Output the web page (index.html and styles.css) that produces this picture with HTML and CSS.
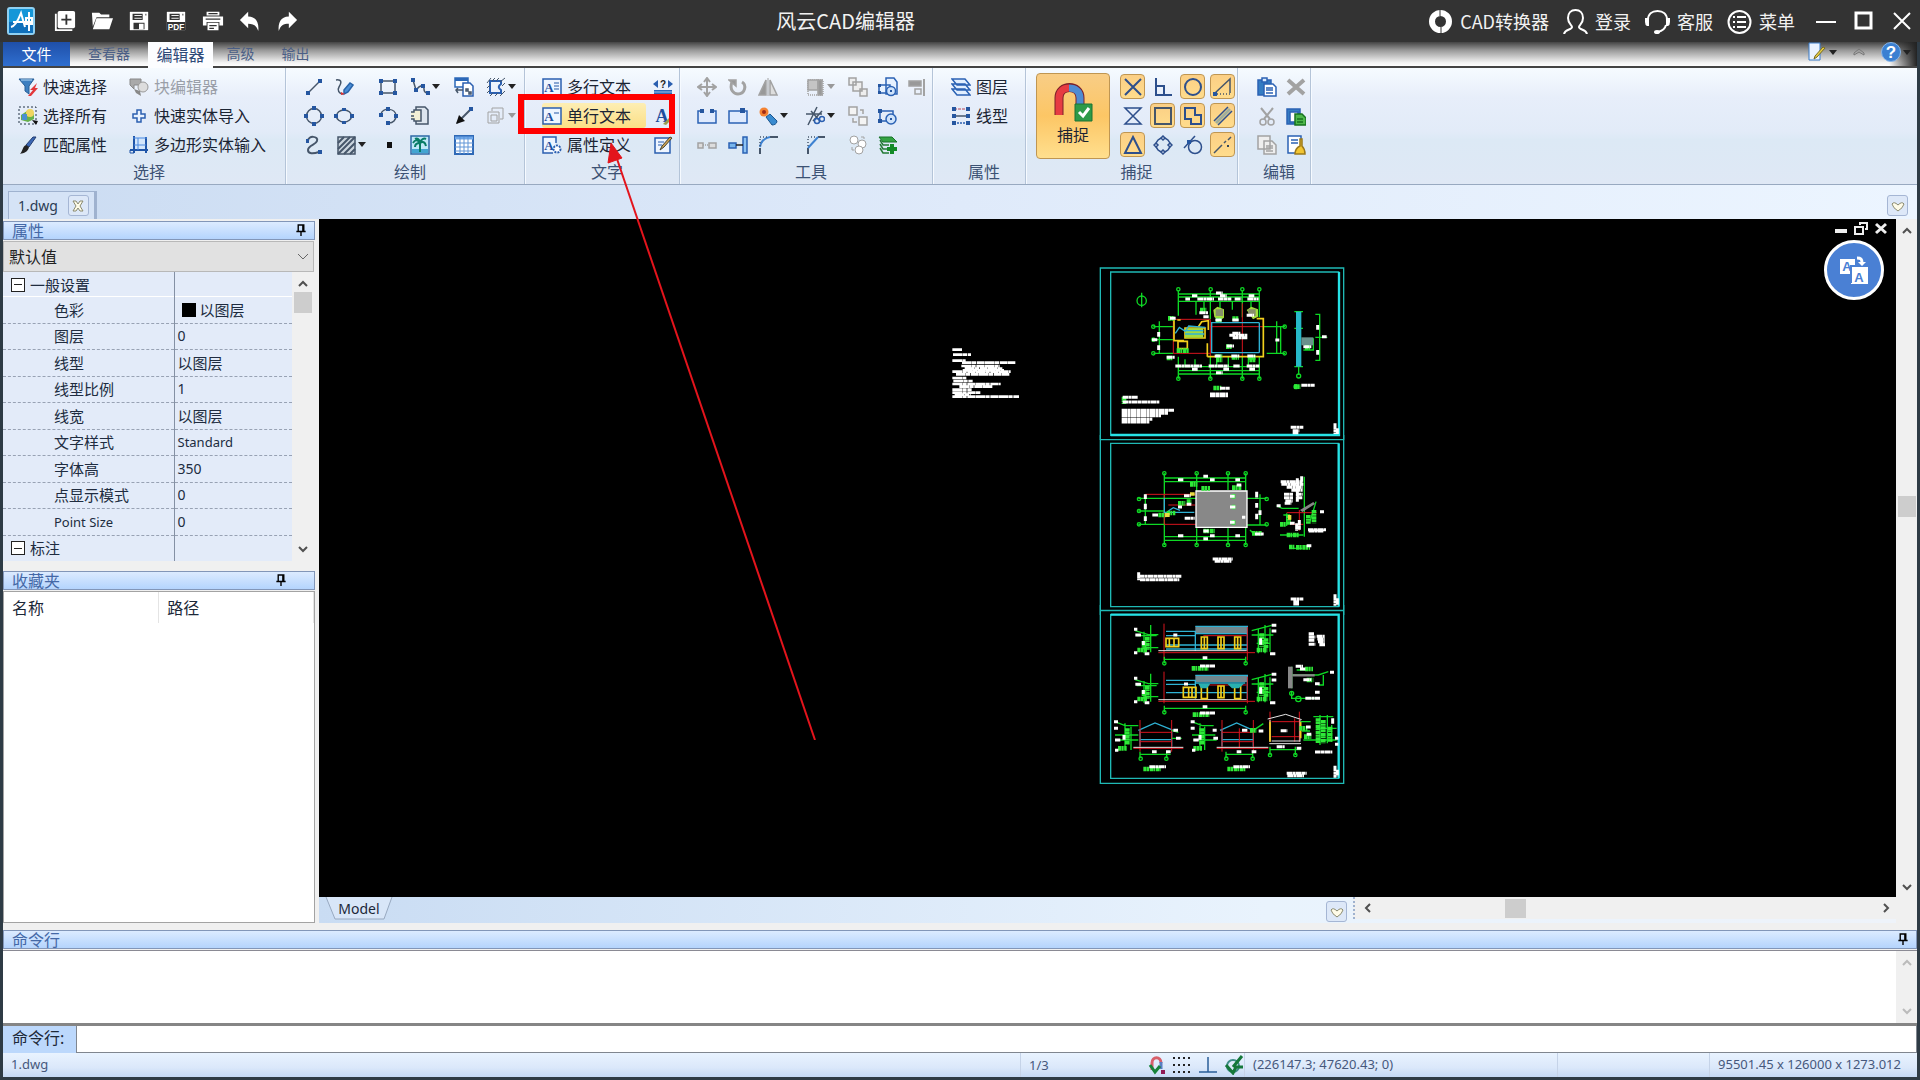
FILE: index.html
```
<!DOCTYPE html>
<html lang="zh-CN">
<head>
    <meta charset="UTF-8">
    <meta name="viewport" content="width=device-width, initial-scale=1.0">
    <title>风云CAD编辑器</title>
    <link rel="stylesheet" href="styles.css">
</head>
<body>
    <header class="titlebar">
        <svg class="logo" viewBox="0 0 28 28"><rect x="1" y="1" width="26" height="26" rx="2" fill="#1597d8" stroke="#8fd0f2" stroke-width="2"/><path d="M2 15h24v11H2z" fill="#0f70bb"/><path d="M4 20c5-1 8-9 10-14l4 14M6 15h19M22 5v19M19 11h6v6h-6z" fill="none" stroke="#fff" stroke-width="2"/></svg>
        <nav class="quick">
            <button aria-label="新建"><svg viewBox="0 0 24 24"><path d="M2 4v18h18" fill="none" stroke="#fff" stroke-width="2"/><rect x="4" y="1" width="19" height="19" rx="2" fill="#fff"/><path d="M13.500 5v11M8 10.500h11" stroke="#333" stroke-width="2"/></svg></button>
            <button aria-label="打开"><svg viewBox="0 0 24 24"><path d="M1 3h8l2 2h9v3H6L2 18zM6 9h18l-4 12H2z" fill="#fff"/></svg></button>
            <button aria-label="保存"><svg viewBox="0 0 24 24"><path d="M2 2h20v20H2z" fill="#fff"/><path d="M5 4h11v7H5zM19 4h1v2h-1zM6 14h12v7H6z" fill="#333"/><path d="M7 6h8M7 9h8" stroke="#fff"/><path d="M12 15h5v6h-5z" fill="#fff"/></svg></button>
            <button aria-label="保存为PDF"><svg viewBox="0 0 24 24"><path d="M2 2h20v20H2z" fill="#fff"/><path d="M5 4h11v7H5zM19 4h1v2h-1zM2 13h20v9H2z" fill="#333"/><path d="M7 6h8M7 9h8" stroke="#fff"/><text x="12" y="22" class="pdf">PDF</text></svg></button>
            <button aria-label="打印"><svg viewBox="0 0 24 24"><path d="M5 2h14v4H5zM1 7h22v10h-4v-4H5v4H1zM6 14h12v8H6z" fill="#fff"/><path d="M7 4h10M8 17h8M8 20h5M4 10h16" stroke="#333" stroke-width="1.500"/></svg></button>
            <button aria-label="撤销"><svg viewBox="0 0 24 24"><path d="M1 11l9-9v5c9 0 12 7 11 16-2-6-5-8-11-8v5z" fill="#fff"/></svg></button>
            <button aria-label="重做"><svg viewBox="0 0 24 24"><path d="M23 11l-9-9v5C5 7 2 14 3 23c2-6 5-8 11-8v5z" fill="#fff"/></svg></button>
        </nav>
        <h1 class="title">风云CAD编辑器</h1>
        <nav class="account">
            <button><svg viewBox="0 0 25 25"><circle cx="12.500" cy="12.500" r="8.500" fill="none" stroke="#fff" stroke-width="6"/><path d="M12 0v7M13 18v7" stroke="#333"/></svg>CAD转换器</button>
            <button><svg viewBox="0 0 25 25"><path d="M1 25c1-5 8-4 8-7 0-2-4-3-4-9 0-5 3-8 7.500-8S20 4 20 9c0 6-4 7-4 9 0 3 7 2 8 7" fill="none" stroke="#fff" stroke-width="2"/></svg>登录</button>
            <button><svg viewBox="0 0 25 25"><path d="M3 11C3 5 7 2 12.500 2S22 5 22 11M21 16c-1 4-4 6-8 7" fill="none" stroke="#fff" stroke-width="2"/><path d="M0 9h4v8H2q-2-1-2-4zM25 9h-4v8h2q2-1 2-4z" fill="#fff"/><ellipse cx="12" cy="23" rx="3" ry="2" fill="#fff"/></svg>客服</button>
            <button><svg viewBox="0 0 25 25"><circle cx="12.500" cy="13" r="11" fill="none" stroke="#fff" stroke-width="2"/><path d="M6 8h2M10 8h9M6 13h2M10 13h9M6 18h2M10 18h9" stroke="#fff" stroke-width="2"/></svg>菜单</button>
        </nav>
        <div class="window-buttons">
            <button aria-label="最小化"><svg viewBox="0 0 20 20"><path d="M0 11h20" stroke="#fff" stroke-width="2"/></svg></button>
            <button aria-label="最大化"><svg viewBox="0 0 20 20"><path d="M2 2h15v15H2z" fill="none" stroke="#fff" stroke-width="3"/></svg></button>
            <button aria-label="关闭"><svg viewBox="0 0 20 20"><path d="M2 2l16 16M18 2L2 18" stroke="#fff" stroke-width="2"/></svg></button>
        </div>
    </header>

    <div class="frame">
        <nav class="tabs">
            <button class="tab file">文件</button>
            <button class="tab">查看器</button>
            <button class="tab active">编辑器</button>
            <button class="tab">高级</button>
            <button class="tab">输出</button>
            <div class="tab-tools">
                <button aria-label="样式"><svg viewBox="0 0 20 20"><path d="M2 1h11v17H2z" fill="#eaf3ff" stroke="#3b7cc9"/><path d="M18 6l-8 9-3 2 1-3 8-9z" fill="#e8cf45" stroke="#776a20"/></svg><svg class="caret" viewBox="0 0 8 5"><path d="M0 0h8L4 5z"/></svg></button>
                <button aria-label="折叠"><svg viewBox="0 0 20 20"><path d="M5 11l5-4 5 4v2l-5-3-5 3z" fill="none" stroke="#777"/></svg></button>
                <button aria-label="帮助"><svg viewBox="0 0 20 20"><circle cx="10" cy="10" r="9.500" fill="#3a80d2" stroke="#86b4e8"/><text x="10" y="16" class="help">?</text></svg><svg class="caret" viewBox="0 0 8 5"><path d="M0 0h8L4 5z"/></svg></button>
            </div>
        </nav>

        <div class="ribbon">
            <section class="group">
                <div class="tools select">
                    <button class="cmd"><svg viewBox="0 0 20 20"><path d="M1 2h15l-5 7v8l-4-3V9z" fill="#3d7fc0" stroke="#285e96"/><path d="M3 3h11" stroke="#b8dcf5"/><path d="M19 6l-7 7h3l-5 6h3l7-8h-3z" fill="#e2373b"/></svg>快速选择</button>
                    <button class="cmd off"><svg viewBox="0 0 20 20"><path d="M1 2h11v6H5v4L1 8z" fill="#aaa" stroke="#888"/><circle cx="14" cy="10" r="5" fill="#ddd" stroke="#999"/><path d="M5 12l6 2 1 5-5-3z" fill="#888"/></svg>块编辑器</button>
                    <button class="cmd"><svg viewBox="0 0 20 20"><path d="M1 1h17v17H1z" fill="none" stroke="#234" stroke-dasharray="2 2"/><path d="M3 9l6-4 7 2v6l-6 3-7-2z" fill="#67b04b"/><circle cx="12" cy="7" r="4" fill="#f0d560"/><path d="M4 8h5v6H4z" fill="#4a8fd1"/><path d="M14 14l6 1-2 4z" fill="#111"/></svg>选择所有</button>
                    <button class="cmd"><svg viewBox="0 0 20 20"><path d="M8 4h4v4h4v4h-4v4H8v-4H4V8h4z" fill="#e8f2ff" stroke="#2b5fb0" stroke-width="1.500"/></svg>快速实体导入</button>
                    <button class="cmd"><svg viewBox="0 0 20 20"><path d="M18 2l-7 10-3-2 7-8z" fill="#3a67b5" stroke="#223d70"/><path d="M8 10l3 2c-1 5-5 6-9 7 3-3 2-7 6-9z" fill="#222"/></svg>匹配属性</button>
                    <button class="cmd"><svg viewBox="0 0 20 20"><path d="M5 2h13v13H5z" fill="#d3e6fb"/><path d="M5 1v17M17 2v16M1 15h18" stroke="#1f55a8" stroke-width="2"/><path d="M4 3h14M9 3v12M5 10h12" stroke="#4c8ae0"/><path d="M1 15v3h4" fill="none" stroke="#1f55a8"/></svg>多边形实体输入</button>
                </div>
                <h2>选择</h2>
            </section>

            <section class="group">
                <div class="tools draw">
                    <button aria-label="直线"><svg class="line" viewBox="0 0 20 20"><path d="M4 16L16 4"/><path class="node" d="M2 14h4v4H2zM14 2h4v4h-4z"/></svg></button>
                    <button aria-label="手绘"><svg class="line" viewBox="0 0 20 20"><path d="M2 3c7-1 5 4 3 7s0 7 4 7"/><path d="M10 13l6-7 3 2-5 7-4 2z" fill="#4c8ed6" stroke="#2863a8"/><path d="M7 15l4 2-4 1z" fill="#d33" stroke="none"/></svg></button>
                    <button aria-label="矩形"><svg class="line" viewBox="0 0 20 20"><path d="M3 4h14v12H3z"/><path class="node" d="M1 2h4v4H1zM15 2h4v4h-4zM1 14h4v4H1zM15 14h4v4h-4z"/></svg></button>
                    <button aria-label="多段线"><svg class="line" viewBox="0 0 20 20"><path d="M3 3l3 10c4-5 8-6 8-1 0 2 1 4 4 4"/><path class="node" d="M1 1h4v4H1zM4 11h4v4H4zM11 7h4v4h-4zM16 14h4v4h-4z"/></svg><svg class="caret" viewBox="0 0 8 5"><path d="M0 0h8L4 5z"/></svg></button>
                    <button aria-label="插入块"><svg class="line" viewBox="0 0 20 20"><path d="M1 1h13v9H1z" fill="#fff" stroke="#2b68b8"/><path d="M1 1h13v3H1z" fill="#2b68b8" stroke="none"/><path d="M9 6h7l3 3v10H9z" fill="#fff" stroke="#2b5fb0"/><path d="M12 12h2v2h-2zM15 15h2v2h-2zM2 13h7M4 11l-2 2 2 3"/></svg></button>
                    <button aria-label="边界"><svg class="line" viewBox="0 0 20 20"><path d="M4 4h11v3c-3 2-3 4 0 6v3H4z" stroke="#2b5fb0" stroke-width="2"/><path d="M1 6l4-5M6 4l3-3M10 4l3-3M14 5l5-4M1 11l3-3M1 16l3-3M4 19l3-3M9 19l3-3M14 19l5-5M16 9l3-3" stroke-width="1"/></svg><svg class="caret" viewBox="0 0 8 5"><path d="M0 0h8L4 5z"/></svg></button>

                    <button aria-label="圆"><svg class="line" viewBox="0 0 20 20"><circle cx="10" cy="10" r="7.500"/><path class="node" d="M8 0h4v4H8zM8 16h4v4H8zM0 8h4v4H0zM16 8h4v4h-4z"/></svg></button>
                    <button aria-label="椭圆"><svg class="line" viewBox="0 0 20 20"><ellipse cx="10" cy="10" rx="7.500" ry="6"/><path class="node" d="M8 2h4v3H8zM8 15h4v3H8zM0 8h4v4H0zM16 8h4v4h-4z"/></svg></button>
                    <button aria-label="圆弧"><svg class="line" viewBox="0 0 20 20"><path d="M3 8c2-7 15-6 15 2 0 4-3 7-7 7"/><path class="node" d="M1 7h4v4H1zM8 1h4v4H8zM16 8h4v4h-4zM8 15h4v4H8z"/></svg></button>
                    <button aria-label="区域"><svg class="line" viewBox="0 0 20 20"><path d="M6 1h9l3 3v14H6z" fill="#dde5ee"/><path d="M1 6h3V4h7v11H4v-2H1M1 10h3" fill="#f3efd5"/></svg></button>
                    <button aria-label="射线"><svg class="line" viewBox="0 0 20 20"><path d="M3 17L17 3" stroke-width="2"/><path d="M2 18l3-9 6 6z" fill="#111" stroke="none"/><path class="node" d="M15 1h4v4h-4z"/></svg></button>
                    <button aria-label="三维" class="off"><svg class="line" viewBox="0 0 20 20"><path d="M2 6h11v11H2zM5 9h6v6H5zM6 5V2h11v11h-3" stroke-width="1"/></svg><svg class="caret" viewBox="0 0 8 5"><path d="M0 0h8L4 5z"/></svg></button>

                    <button aria-label="样条"><svg class="line" viewBox="0 0 20 20"><path d="M4 6c0-6 11-5 9 0-1 4-9 4-9 9 0 4 5 4 11 2" stroke-width="2"/><path class="node" d="M2 4h3v4H2zM14 15h4v4h-4z"/></svg></button>
                    <button aria-label="填充" class="hatch"><svg class="line" viewBox="0 0 20 20"><path d="M2 2h17v17H2z" fill="#cbd5de"/><path d="M2 8l6-6M2 14L14 2M2 19L19 2M8 19L19 8M14 19l5-5" stroke-width="2"/></svg><svg class="caret" viewBox="0 0 8 5"><path d="M0 0h8L4 5z"/></svg></button>
                    <button aria-label="点"><svg viewBox="0 0 20 20"><path d="M9 7h5v6H9z" fill="#111"/></svg></button>
                    <button aria-label="图像"><svg viewBox="0 0 20 20"><path d="M1 1h18v18H1z" fill="#bfe8f7" stroke="#2f69a6" stroke-width="1.500"/><path d="M2 14h16v4H2z" fill="#42a5d2"/><path d="M10 17V8M10 8C7 4 5 5 3 8M10 8c0-4-3-5-5-4M10 8c1-4 4-5 6-4M10 8c3-2 5-1 6 3M10 8c-3 0-5 1-5 4" fill="none" stroke="#087c65" stroke-width="2"/></svg></button>
                    <button aria-label="表格"><svg viewBox="0 0 20 20"><path d="M1 1h18v18H1z" fill="#fff" stroke="#2f69b6" stroke-width="2"/><path d="M1 3h18" stroke="#6da6e8" stroke-width="3"/><path d="M6 2v17M10 2v17M14 2v17M1 8h18M1 12h18M1 16h18" stroke="#6095d6"/></svg></button>
                </div>
                <h2>绘制</h2>
            </section>

            <section class="group">
                <div class="tools text">
                    <button class="cmd"><svg viewBox="0 0 20 20"><path d="M1 2h18v16H1z" class="box"/><text x="7" y="15" class="letter">A</text><path d="M12 6h5M12 9h5M12 12h5" stroke="#2458a6"/></svg>多行文本</button>
                    <button aria-label="标注"><svg viewBox="0 0 20 20"><path d="M1 15h18" stroke="#2b68b8" stroke-width="4"/><path d="M1 15h18" stroke="#9fc4ee"/><path d="M0 7l5-4v8zM20 7l-5-4v8z" fill="#2b5fb0"/><text x="10" y="11" class="small-q">?</text></svg></button>
                    <button class="cmd hover"><svg viewBox="0 0 20 20"><path d="M1 2h18v16H1z" class="box"/><text x="7" y="15" class="letter">A</text><path d="M12 7h5" stroke="#2458a6"/></svg>单行文本</button>
                    <button aria-label="文字样式"><svg viewBox="0 0 20 20"><text x="9" y="16" class="letter big">A</text><path d="M10 18l7-7 2 2-6 6z" fill="#9b9a4e"/></svg></button>
                    <button class="cmd"><svg viewBox="0 0 20 20"><path d="M11 18H1V2h13v6" class="box"/><text x="7" y="15" class="letter">A</text><circle cx="15" cy="14" r="3.500" fill="#fff" stroke="#2b5fb0" stroke-width="2" stroke-dasharray="2 1"/></svg>属性定义</button>
                    <button aria-label="编辑文字"><svg viewBox="0 0 20 20"><path d="M2 3h15v15H2z" class="box"/><path d="M5 7h6M5 10h4" stroke="#2b5fb0"/><path d="M19 3l-8 9-4 3 2-4 8-9z" fill="#d4a450" stroke="#443"/></svg></button>
                </div>
                <h2>文字</h2>
            </section>

            <section class="group">
                <div class="tools modify">
                    <button aria-label="移动" class="off"><svg class="line" viewBox="0 0 20 20"><path d="M10 2v16M2 10h16M7 5l3-4 3 4M7 15l3 4 3-4M5 7l-4 3 4 3M15 7l4 3-4 3" stroke-width="2"/></svg></button>
                    <button aria-label="旋转" class="off"><svg class="line" viewBox="0 0 20 20"><path d="M4 5c-3 8 2 12 6 12 7 0 9-9 4-12" stroke-width="3"/><path d="M1 3h7v6z" fill="#999"/></svg></button>
                    <button aria-label="镜像" class="off"><svg class="line" viewBox="0 0 20 20"><path d="M1 18h7V3z" fill="#999"/><path d="M12 18h7L12 3z" fill="#ddd"/><path d="M10 1v18" stroke-width="1"/></svg></button>
                    <button aria-label="阵列" class="off"><svg class="line" viewBox="0 0 20 20"><path d="M3 3h15v15H3z" stroke-dasharray="1 1"/><path d="M3 3h10v10H3z" fill="#c4c4c4"/><path d="M13 3h4v15h-4z" fill="#999"/></svg><svg class="caret" viewBox="0 0 8 5"><path d="M0 0h8L4 5z"/></svg></button>
                    <button aria-label="组合" class="off"><svg class="line" viewBox="0 0 20 20"><path d="M1 1h7v7H1zM12 12h7v7h-7zM5 5h9v9H5z" fill="#eee"/></svg></button>
                    <button aria-label="形状"><svg class="line blue" viewBox="0 0 20 20"><path d="M8 1h8l3 4v12H8zM1 8h11v8H1z" fill="#e6f1ff"/><circle cx="13" cy="14" r="4.500" fill="#cfe3fb"/><path class="node" d="M0 7h3v3H0zM0 14h3v3H0zM12 13h2v2h-2z"/></svg></button>
                    <button aria-label="对齐" class="off"><svg class="line" viewBox="0 0 20 20"><path d="M2 4h12v5H2z" fill="#999"/><path d="M8 12h6v5H8z"/><path d="M17 2v17" stroke-width="2"/></svg></button>

                    <button aria-label="打断"><svg class="line blue" viewBox="0 0 20 20"><path d="M5 5H1v12h18V5h-4" fill="#dfeafd"/><path class="node" d="M3 3h4v4H3zM13 3h4v4h-4z"/></svg></button>
                    <button aria-label="打断于点"><svg class="line blue" viewBox="0 0 20 20"><path d="M1 5h18v12H1z" fill="#dfeafd"/><path class="node" d="M12 2h5v5h-5z"/></svg></button>
                    <button aria-label="分解"><svg viewBox="0 0 20 20"><circle cx="6" cy="6" r="4.500" fill="#f48232"/><circle cx="6" cy="6" r="2" fill="#a02b16"/><path d="M8 11l4-3 7 7c0 3-3 4-5 4z" fill="#398bd0" stroke="#1b568f"/></svg><svg class="caret" viewBox="0 0 8 5"><path d="M0 0h8L4 5z"/></svg></button>
                    <button aria-label="修剪"><svg class="line" viewBox="0 0 20 20"><path d="M12 1L3 19M1 8h16M6 5l9 10M17 5L8 15"/><circle cx="12" cy="15" r="2.500" stroke="#2b5fb0"/><circle cx="17" cy="13" r="2.500" stroke="#2b5fb0"/></svg><svg class="caret" viewBox="0 0 8 5"><path d="M0 0h8L4 5z"/></svg></button>
                    <button aria-label="取消组合" class="off"><svg class="line" viewBox="0 0 20 20"><path d="M1 1h8v8H1zM11 11h8v8h-8zM12 4h3v4M5 12v4h4" fill="#f4f4f4"/></svg></button>
                    <button aria-label="编辑形状"><svg class="line blue" viewBox="0 0 20 20"><path d="M2 5h13v10H2z"/><circle cx="13" cy="13" r="5" fill="#cfe3fb"/><path class="node" d="M0 3h4v4H0zM0 13h4v4H0zM12 12h2v2h-2z"/></svg></button>
                    <span></span>

                    <button aria-label="连接" class="off"><svg class="line" viewBox="0 0 20 20"><path d="M1 8h5v5H1zM12 8h7v5h-7z" fill="#ddd"/><path d="M6 10h6" stroke-dasharray="1 1"/></svg></button>
                    <button aria-label="延伸"><svg class="line blue" viewBox="0 0 20 20"><path d="M1 8h7v5H1z" fill="#79b6ec"/><path d="M15 2h4v16h-4z" fill="#8fc4f3"/><path d="M8 10h7" stroke="#222"/></svg></button>
                    <button aria-label="圆角"><svg class="line" viewBox="0 0 20 20"><path d="M2 19v-6M12 2h8" stroke-width="2"/><path d="M2 12C3 6 7 3 12 2" stroke="#3d82d1" stroke-width="2"/><path d="M2 11V2h9" stroke-dasharray="1 2"/></svg></button>
                    <button aria-label="倒角"><svg class="line" viewBox="0 0 20 20"><path d="M3 19v-6M13 2h7" stroke-width="2"/><path d="M3 13L13 2" stroke="#3d82d1" stroke-width="2"/><path d="M3 11V2h8" stroke-dasharray="1 2"/></svg></button>
                    <button aria-label="绘图次序" class="off"><svg class="line" viewBox="0 0 20 20"><g stroke-width="1"><circle cx="6" cy="5" r="4" fill="#fff"/><circle cx="14" cy="9" r="4" fill="#fff"/><circle cx="11" cy="15" r="4" fill="#fff"/><path d="M13 2h3v2M4 12v3h2"/></g></svg></button>
                    <button aria-label="添加图层"><svg viewBox="0 0 20 20"><path d="M1 2h13l5 5H5z" fill="#35a343" stroke="#187329"/><path d="M2 5l3 5h6M2 9l3 5h6M2 13l3 5h6" fill="none" stroke="#247b36" stroke-width="1.500"/><path d="M14 9v10M9 14h10" stroke="#138b27" stroke-width="4"/></svg></button>
                </div>
                <h2>工具</h2>
            </section>

            <section class="group">
                <div class="tools props">
                    <button class="cmd"><svg class="line blue" viewBox="0 0 20 20"><path d="M1 12h13l5 6H6zM1 7h13l5 6H6zM1 2h13l5 6H6z" fill="#e2efff"/></svg>图层</button>
                    <button class="cmd"><svg class="line" viewBox="0 0 20 20"><path d="M3 3h14" stroke="#c67d8e" stroke-dasharray="3 1"/><path d="M3 10h14"/><path d="M3 17h14" stroke="#2b5fb0" stroke-dasharray="2 1"/><path class="node" d="M1 1h4v4H1zM15 1h4v4h-4zM1 8h4v4H1zM15 8h4v4h-4zM1 15h4v4H1zM15 15h4v4h-4z"/></svg>线型</button>
                </div>
                <h2>属性</h2>
            </section>

            <section class="group">
                <div class="tools snap">
                    <button class="snap-big on"><svg viewBox="0 0 40 40"><path d="M6 33V16C6 2 27 2 27 16v7" fill="none" stroke="#7b2029" stroke-width="9"/><path d="M6 33V16C6 9 11 6 16 6" fill="none" stroke="#e63b42" stroke-width="7"/><path d="M16 6c6 0 11 3 11 10v7" fill="none" stroke="#4f8bd1" stroke-width="7"/><path d="M22 22h17v17H22z" fill="#2d9a48" stroke="#1c7333"/><path d="M26 30l4 4 6-8" fill="none" stroke="#fff" stroke-width="3"/></svg>捕捉</button>
                    <button aria-label="交点" class="toggle on"><svg class="line navy" viewBox="0 0 20 20"><path d="M2 2l16 16M18 2L2 18" stroke-width="2"/></svg></button>
                    <button aria-label="垂足" class="toggle"><svg class="line navy" viewBox="0 0 20 20"><path d="M3 1v17h16M3 9h8v9" stroke-width="2"/></svg></button>
                    <button aria-label="圆心" class="toggle on"><svg class="line navy" viewBox="0 0 20 20"><circle cx="10" cy="10" r="8" stroke-width="2"/></svg></button>
                    <button aria-label="延长" class="toggle on"><svg class="line" viewBox="0 0 20 20"><path d="M2 16L17 2v14"/><path d="M1 17h18" stroke-dasharray="1 2"/><path class="node" d="M0 15h4v4H0z"/></svg></button>
                    <button aria-label="最近点" class="toggle"><svg class="line navy" viewBox="0 0 20 20"><path d="M2 2h16L2 18h16z"/></svg></button>
                    <button aria-label="端点" class="toggle on"><svg class="line" viewBox="0 0 20 20"><path d="M2 2h16v16H2z" stroke-width="2"/></svg></button>
                    <button aria-label="插入点" class="toggle on"><svg class="line navy" viewBox="0 0 20 20"><path d="M2 2h10v7h6v9H8v-5H2z" stroke-width="2"/></svg></button>
                    <button aria-label="平行" class="toggle on"><svg class="line navy" viewBox="0 0 20 20"><path d="M3 17L17 3" stroke="#9fae9c" stroke-width="3"/><path d="M1 15L15 1M5 19L19 5"/></svg></button>
                    <button aria-label="中点" class="toggle on"><svg class="line navy" viewBox="0 0 20 20"><path d="M10 2l8 16H2z" stroke-width="2"/></svg></button>
                    <button aria-label="象限点" class="toggle"><svg class="line navy" viewBox="0 0 20 20"><circle cx="10" cy="10" r="7"/><path d="M10 1l2 2-2 2-2-2zM10 15l2 2-2 2-2-2zM3 8l2 2-2 2-2-2zM17 8l2 2-2 2-2-2z" fill="#e8f0fb"/></svg></button>
                    <button aria-label="切点" class="toggle"><svg class="line navy" viewBox="0 0 20 20"><circle cx="12" cy="12" r="6.500"/><path d="M1 13L12 1"/><path class="node" d="M4 5h4v4H4z"/></svg></button>
                    <button aria-label="节点" class="toggle on"><svg class="line" viewBox="0 0 20 20"><path d="M1 18L9 10M11 8l2-2M15 5l3-3"/><path d="M14 10h2v2h-2z" fill="#345" stroke="none"/></svg></button>
                </div>
                <h2>捕捉</h2>
            </section>

            <section class="group">
                <div class="tools edit">
                    <button aria-label="粘贴"><svg class="line blue" viewBox="0 0 20 20"><path d="M1 3h13v15H1z" fill="#347cc2"/><path d="M5 1h5v4H5z" fill="#dcecff"/><path d="M7 7h9l3 3v9H7z" fill="#fff"/><path d="M9 11h7M9 13h7M9 16h7"/></svg></button>
                    <button aria-label="删除" class="off"><svg class="line" viewBox="0 0 20 20"><path d="M2 3l16 14M18 3L2 17" stroke-width="4"/></svg></button>
                    <button aria-label="剪切" class="off"><svg class="line" viewBox="0 0 20 20"><path d="M4 2l9 11M16 2L7 13" stroke-width="2"/><circle cx="6" cy="16" r="3"/><circle cx="14" cy="16" r="3"/></svg></button>
                    <button aria-label="粘贴为块"><svg class="line blue" viewBox="0 0 20 20"><path d="M1 3h13v15H1z" fill="#347cc2"/><path d="M4 6h8v10H4z" fill="#fff"/><path d="M9 8h7l4 4v7H9z" fill="#4eb84b" stroke="#17721f"/><path d="M11 13h6M11 16h6" stroke="#17721f"/></svg></button>
                    <button aria-label="复制" class="off"><svg class="line" viewBox="0 0 20 20"><path d="M1 1h12v13H1zM7 6h8l4 4v9H7z" fill="#eee"/><path d="M9 11h7M9 13h7M9 16h7"/></svg></button>
                    <button aria-label="清理"><svg class="line blue" viewBox="0 0 20 20"><path d="M2 1h13v17H2z" fill="#fff"/><path d="M5 5h7M5 8h7"/><path d="M14 4v7c-4 2-5 5-5 8h10c0-4-1-6-3-8V4z" fill="#f2c532" stroke="#9b791b"/></svg></button>
                </div>
                <h2>编辑</h2>
            </section>
        </div>

        <div class="doc-tabs">
            <div class="doc-tab">1.dwg <button class="mini" aria-label="关闭文档"><svg viewBox="0 0 14 14"><path d="M2 2h3l2 3 2-3h3L9 7l3 5H9L7 9l-2 3H2l3-5z" fill="#fffce8" stroke="#8a8a70"/></svg></button></div>
            <button class="mini" aria-label="文档列表"><svg viewBox="0 0 14 14"><path d="M1 5q2-3 6 1 4-4 6-1-1 4-6 7-5-3-6-7z" fill="#fffce8" stroke="#8a8a70"/></svg></button>
        </div>

        <main class="workspace">
            <aside class="side">
                <h3 class="panel-head">属性<svg class="pin" viewBox="0 0 10 14"><path d="M2 1h6v7H2zM0 8h10M5 8v5M7 1v7" fill="none" stroke="#000" stroke-width="1.500"/></svg></h3>
                <select class="preset" aria-label="属性集"><option>默认值</option></select>
                <div class="prop-area">
                    <table class="prop-table">
                        <tr class="section first"><th scope="row"><i class="minus"></i>一般设置</th><td></td></tr>
                        <tr><th scope="row">色彩</th><td class="color"><i class="swatch"></i>以图层</td></tr>
                        <tr><th scope="row">图层</th><td>0</td></tr>
                        <tr><th scope="row">线型</th><td>以图层</td></tr>
                        <tr><th scope="row">线型比例</th><td>1</td></tr>
                        <tr><th scope="row">线宽</th><td>以图层</td></tr>
                        <tr><th scope="row">文字样式</th><td>Standard</td></tr>
                        <tr><th scope="row">字体高</th><td>350</td></tr>
                        <tr><th scope="row">点显示模式</th><td>0</td></tr>
                        <tr><th scope="row">Point Size</th><td>0</td></tr>
                        <tr class="section"><th scope="row"><i class="minus"></i>标注</th><td></td></tr>
                    </table>
                    <div class="vscroll">
                        <button aria-label="向上"><svg class="chev" viewBox="0 0 12 12"><path d="M2 8l4-4 4 4"/></svg></button>
                        <div class="thumb"></div>
                        <button class="end" aria-label="向下"><svg class="chev" viewBox="0 0 12 12"><path d="M2 4l4 4 4-4"/></svg></button>
                    </div>
                </div>
                <h3 class="panel-head fav">收藏夹<svg class="pin" viewBox="0 0 10 14"><path d="M2 1h6v7H2zM0 8h10M5 8v5M7 1v7" fill="none" stroke="#000" stroke-width="1.500"/></svg></h3>
                <div class="fav-list">
                    <table>
                        <thead><tr><th>名称</th><th>路径</th></tr></thead>
                    </table>
                </div>
            </aside>

            <section class="view">
                <div class="canvas">
                    <svg class="drawing" viewBox="0 0 1577 678" preserveAspectRatio="xMidYMin meet">
                        <!-- notes beside the sheets -->
                        <svg x="601" y="111" width="120" height="80" viewBox="0 0 360 240">
                            <g class="note">
                                <path d="M97 59h30M99 74h54M97 92h40"/>
                                <path d="M126 98h160M124 108h116M134 116h115M97 125h175M108 133h160M97 144h42M100 153h58M97 162h145M118 170h100M97 179h58M97 188h84M97 200h200M128 121h124M104 194h48"/>
                            </g>
                        </svg>

                        <!-- sheet 1: floor plan -->
                        <svg x="771" y="41" width="270" height="180" viewBox="0 0 810 540">
                            <path class="frame-line" d="M31 540V24h730v516M62 526V36h684v490z"/>
                            <path class="frame-bold" d="M62 525h685V36"/>
                            <circle class="g" cx="155" cy="122" r="14"/>
                            <path class="g" d="M155 98v44M265 92v75M361 92v86M457 92v80M508 92v80M265 102h243M265 111h243M265 124h243M318 124v40M342 124v25M390 124v50M427 124v25M483 124v26M265 290v66M361 290v66M457 290v66M508 290v66M265 320h243M265 332h243M265 342h243M190 200h60M190 239h60M190 280h60M208 184v96M520 200h65M530 280h55M560 184v96M572 200v80M285 298v24M315 298v24M380 290v30M415 290v30M475 290v30"/>
                            <path class="g" d="M613 155h26M613 205h26M613 320h26M626 155v190M676 163h13v138h-13M676 232h36M640 270h30v-35M618 380h10"/>
                            <g class="gc"><circle cx="265" cy="88" r="5"/><circle cx="362" cy="88" r="5"/><circle cx="457" cy="88" r="5"/><circle cx="508" cy="88" r="5"/><circle cx="265" cy="356" r="5"/><circle cx="361" cy="356" r="5"/><circle cx="457" cy="356" r="5"/><circle cx="508" cy="356" r="5"/><circle cx="190" cy="200" r="5"/><circle cx="190" cy="239" r="5"/><circle cx="190" cy="280" r="5"/><circle cx="584" cy="200" r="5"/><circle cx="584" cy="280" r="5"/><circle cx="626" cy="348" r="6"/><circle cx="618" cy="380" r="6"/></g>
                            <path class="r" d="M250 280V178h110M360 200h160M250 280h110M457 130v160M361 178v110M520 176v20"/>
                            <path class="o" d="M252 180v62h30M262 180h10M352 290h168V176h-20M352 250v40M325 200l10-15 20-3v28M285 204h60v30h-60zM264 244h28v22h-28z"/>
                            <path fill="#a5dc3c" d="M285 205h55v28h-55zM370 150l12-10 20 8v25l-15 10-14-12zM470 150l14-10 20 8v22l-15 8z"/>
                            <path fill="#868f6a" d="M377 148h22v20h-22zM475 148h22v20h-22z"/>
                            <path class="c2" d="M256 220l12-18 18 12 10-16 50 4M285 212h55M285 222h58M363 188h145M363 278h145M365 188v90M508 188v90"/>
                            <path fill="#26b9c9" d="M618 155h16v165h-16z"/><path fill="#69918c" d="M634 232h36v24h-36z"/>
                            <path class="gt" d="M370 384h24M230 294h18M378 290h20M425 292h22M474 292h22M378 180h18M427 176h20M408 260h18M612 380h20M645 262h15M102 410v22M234 175h20M330 150h20M260 272h36M378 300h20M478 300h20"/>
                            <g class="label">
                                <path d="M378 99h20M306 107h16M390 107h20M476 107h18M286 117h14M322 117h50M384 117h40M434 117h20M472 117h34M328 158h26M340 170h16M376 180h20M470 166h22M427 180h20M427 220h24M418 226h54M428 233h44M410 258h22M256 318h80M356 318h60M430 318h20M470 318h38M306 328h18M400 328h18M478 328h18M378 338h20M240 175h18M230 292h24M374 288h20M424 288h24M472 288h24M390 385h30M640 260h24M634 376h40M696 230h14M186 239h16M556 240h12M206 216v14M206 256v14M683 195v14M683 270v14"/>
                                <path d="M360 402h54M360 407h54M98 412h46M98 426h110M95 451h158M95 460h140M95 467h118M95 478h92M95 486h84M602 502h38M608 512h20M608 518h18M735 490v32M742 505v18"/>
                            </g>
                        </svg>

                        <!-- sheet 2: roof plan -->
                        <svg x="771" y="216" width="270" height="180" viewBox="0 0 810 540">
                            <path class="frame-line" d="M31 0v540M761 0v540M31 14h730M31 526h730M62 25h684v490H62z"/>
                            <path class="frame-bold" d="M746 25v490"/>
                            <path class="g" d="M223 115v215M320 115v60M320 280v50M414 115v50M414 280v50M467 115v215M223 129h244M223 140h244M223 305h244M223 316h244M145 190h175M145 228h80M145 268h80M166 178v90M470 190h60M470 270h60M510 178v92M480 285l12 12h20M643 125v180M560 212l16 8h50M570 300h70M660 260l18-60M580 240h20M597 340h40M590 235v38"/>
                            <g class="gc"><circle cx="223" cy="115" r="5"/><circle cx="320" cy="115" r="5"/><circle cx="414" cy="115" r="5"/><circle cx="467" cy="115" r="5"/><circle cx="223" cy="330" r="5"/><circle cx="320" cy="330" r="5"/><circle cx="414" cy="330" r="5"/><circle cx="467" cy="330" r="5"/><circle cx="147" cy="192" r="5"/><circle cx="147" cy="228" r="5"/><circle cx="147" cy="268" r="5"/><circle cx="530" cy="192" r="5"/><circle cx="530" cy="268" r="5"/></g>
                            <path class="r" d="M166 178h150M223 268h95M223 178v90M235 210h80M590 233h90M628 225v62M600 268h40"/>
                            <path class="c2" d="M223 188v46M223 232h90M235 228l15-10 20 8"/>
                            <path fill="#888" stroke="#fff" stroke-width="4" d="M318 168h153v109H318z"/>
                            <path fill="#888" d="M630 225l40-24 5 6-38 24z"/>
                            <path class="gt" d="M300 148h22M334 160h26M426 158h28M340 288h34M205 240h24M230 234h26M264 205h22M290 200h14M425 184h12M425 216h12M425 262h12M597 336h16M618 337h42M655 240v26M672 225v40M570 268h18M590 300h38M596 240v30M486 295h30"/>
                            <path fill="#e9dd43" d="M300 172h14v10h-14zM225 234h14v12h-14zM594 240h10v14h-10z"/>
                            <g class="label">
                                <path d="M340 124h14M264 134h16M360 134h14M436 134h14M440 150h14M282 182h20M284 250h30M290 208h14M264 216h12M187 240h18M340 288h16M420 184h14M420 216h16M420 262h14M456 247h10M264 302h16M360 302h14M436 302h14M340 311h14M495 297h26M166 178v14M166 206v18M166 244v14M500 170v20M500 204v14M500 236v18M510 226v14M560 212h12M600 265h14M690 230h12M650 332h14"/>
                                <path d="M368 372h60M374 379h50M146 424h128M150 434h118M146 412v24M572 140h66M574 148h66M590 157h48M604 166h34M582 178h28M618 178h20M582 188h28M620 188h18M586 198h22M584 205h20M622 130v70M635 124v16M654 284h54M656 288h44M602 492h38M610 501h18M610 507h18M735 478v34M742 490v20M628 255v30M620 265v22"/>
                            </g>
                        </svg>

                        <!-- sheet 3: elevations and sections -->
                        <svg x="771" y="386" width="270" height="185" viewBox="0 0 810 555">
                            <path class="frame-line" d="M31 0v535h730V0M31 17h730M62 520V29h684v491z"/>
                            <path class="frame-bold" d="M62 29h684v491"/>
                            <path fill="#71878e" d="M316 64h156v20H316zM316 211h156v20H316z"/>
                            <path class="c2" d="M228 79h88v59M316 64h156v74M316 86h156M228 92h88M228 120h244M228 132h244M228 226h88v55M316 211h156v70M228 238h88M228 263h244M316 234h150"/>
                            <path class="c2" d="M145 376l50-22 55 22M150 374v50M245 374v50M150 404h95M390 376l50-22 50 22M396 374v50M490 374v50M396 404h95"/>
                            <path class="r" d="M205 143h290M205 289h290M222 56v110M472 66v100M222 200v95M472 215v80M340 92h130M340 240h130M130 430h150M380 430h155M150 345v95M245 345v95M150 382h95M150 410h95M396 345v95M490 345v95M448 370v60M396 382h95M396 410h95M540 320v90M628 320v90M614 340v70M545 350h85M545 395h85"/>
                            <path stroke="#e8e8e8" stroke-width="3" fill="none" d="M205 137h265M205 284h265M130 427h150M380 427h155M533 342l54-14 48 16M540 345v65M630 345v65M545 408h85M538 416h95"/>
                            <path class="o" d="M228 100h38v25h-38zM238 100v25M252 100v25M334 96h18v35h-18zM384 96h18v35h-18zM434 96h18v35h-18zM280 247h38v30h-38zM296 247v30M306 247v30M334 243h18v38h-18zM384 243h18v35h-18zM434 243h18v38h-18zM540 350v60M632 350v50M343 96v35M393 96v35M443 96v35M393 243v35"/>
                            <path fill="#29b0b0" d="M325 236h36l-10 14h-18zM412 236h50l-16 14h-20z"/>
                            <path class="g" d="M223 155v20M467 155v20M223 163h244M223 302v20M467 302v20M223 310h244M135 77l40 12h30M140 92h60M160 128h45M182 60v82M162 80v65M485 77l60-16M485 90h65M500 115h40M505 70v75M525 60v85M540 70v70M135 224l40 12h30M140 242h60M160 275h45M182 206v84M162 228v65M485 224l60-16M485 237h65M500 262h40M505 217v75M525 207v85M540 217v70"/>
                            <path class="g" d="M75 350l30 12h40M75 390h70M75 405h70M105 355v80M123 365v70M306 350l30 12h35M306 390h70M310 405h70M330 355v80M344 365v70M150 440v20M230 440v20M150 448h92M408 440v20M488 440v20M408 448h80M245 376l20 6M245 400h30M490 376l30-20M540 425v25M616 425v25M540 434h92M632 350h30M636 378h24M640 405h100M690 330v90M712 330v85M670 335h60M680 370h60M725 360v50"/>
                            <path class="g" d="M605 185v65M620 195h30M605 210h80l30-10M700 210v30h-15M605 280h80M605 260v22"/>
                            <path stroke="#888" stroke-width="14" d="M601 185v65"/><path stroke="#888" stroke-width="7" d="M608 211h66"/>
                            <g class="gc"><circle cx="223" cy="175" r="5"/><circle cx="467" cy="175" r="5"/><circle cx="223" cy="322" r="5"/><circle cx="467" cy="322" r="5"/><circle cx="152" cy="461" r="5"/><circle cx="229" cy="461" r="5"/><circle cx="409" cy="461" r="5"/><circle cx="488" cy="461" r="5"/><circle cx="540" cy="450" r="5"/><circle cx="616" cy="450" r="5"/><circle cx="625" cy="282" r="8"/><circle cx="605" cy="265" r="6"/></g>
                            <path class="gt" d="M305 190h50M308 329h50M160 492h52M412 492h54M172 95v40M162 108v25M172 242v40M162 256v25M515 85v40M528 100v30M515 232v40M528 246v30M142 135h30M142 282h30M500 135h32M500 282h32M112 370v50M335 370v50M84 430h26M310 430h26M684 340v75M700 345v70M720 365v45M645 192h24M650 225h20M628 370h24M642 395h22M480 376h20"/>
                            <g class="label">
                                <path d="M132 73h10M250 90h12M136 90h18M132 143h10M164 146h14M160 108v12M338 158h14M545 61h14M545 78h14M512 100v20M540 146h16M330 183h46M132 220h10M136 238h18M132 290h10M164 293h14M160 255v12M338 305h14M282 237h12M545 208h14M545 225h14M512 247v20M540 293h16M330 324h46M72 350h12M72 370h12M75 405h16M75 436h10M102 390v14M250 376h14M258 400h14M186 440h14M228 440h14M302 350h12M302 370h12M310 405h16M306 436h10M330 390v14M368 376h12M370 400h14M440 440h14M485 440h14M456 376h16M178 485h50M430 485h50M572 377h20M560 425h24M620 430h14M648 366h14M650 388h14M675 441h52M617 184h22M630 192h16M640 224h24M675 236h14M720 202h12M675 262h14M646 280h44M728 340v16M735 400h10M735 418h10M506 378h14"/>
                                <path d="M656 86h16M656 96h20M656 106h18M656 118h20M680 94h24M682 102h22M684 110h20M688 119h18M590 505h60M592 512h50M735 482v36M742 494v20"/>
                            </g>
                        </svg>
                    </svg>
                    <div class="mdi">
                        <button aria-label="最小化文档"><svg viewBox="0 0 14 14"><path d="M1 10h12" stroke="#eee" stroke-width="4"/></svg></button>
                        <button aria-label="还原文档"><svg viewBox="0 0 14 14"><path d="M6 4V2h7v6h-2M1 6h8v7H1z" fill="none" stroke="#eee" stroke-width="2"/></svg></button>
                        <button aria-label="关闭当前文档"><svg viewBox="0 0 14 14"><path d="M2 3l10 9M12 3L2 12" stroke="#eee" stroke-width="3"/></svg></button>
                    </div>
                    <button class="translate" aria-label="翻译"><svg viewBox="0 0 30 30"><path d="M1 4h15v15H1zM12 12h17v17H12z" fill="#fff"/><path d="M12 12V28M11 11h18" stroke="#4a80d4" stroke-width="2"/><text x="8" y="16" class="tr">A</text><text x="20" y="27" class="tr">A</text><path d="M18 3c4 0 5 1 5 5" fill="none" stroke="#fff" stroke-width="3"/><path d="M19 7h8l-4 4z" fill="#fff"/></svg></button>
                </div>
                <div class="sheet-bar">
                    <button class="sheet-tab">Model</button>
                    <button class="mini" aria-label="布局列表"><svg viewBox="0 0 14 14"><path d="M1 5q2-3 6 1 4-4 6-1-1 4-6 7-5-3-6-7z" fill="#fffce8" stroke="#8a8a70"/></svg></button>
                    <div class="hscroll">
                        <button aria-label="向左"><svg class="chev" viewBox="0 0 12 12"><path d="M8 2L4 6l4 4"/></svg></button>
                        <div class="thumb"></div>
                        <button class="end" aria-label="向右"><svg class="chev" viewBox="0 0 12 12"><path d="M4 2l4 4-4 4"/></svg></button>
                    </div>
                </div>
            </section>
            <div class="vscroll view-scroll">
                <button aria-label="画布向上"><svg class="chev" viewBox="0 0 12 12"><path d="M2 8l4-4 4 4"/></svg></button>
                <div class="thumb"></div>
                <button class="end" aria-label="画布向下"><svg class="chev" viewBox="0 0 12 12"><path d="M2 4l4 4 4-4"/></svg></button>
            </div>
        </main>

        <section class="command">
            <h3 class="panel-head">命令行<svg class="pin" viewBox="0 0 10 14"><path d="M2 1h6v7H2zM0 8h10M5 8v5M7 1v7" fill="none" stroke="#000" stroke-width="1.500"/></svg></h3>
            <div class="log">
                <textarea aria-label="命令记录" readonly></textarea>
                <div class="vscroll dim">
                    <button aria-label="记录向上"><svg class="chev" viewBox="0 0 12 12"><path d="M2 8l4-4 4 4"/></svg></button>
                    <button class="end" aria-label="记录向下"><svg class="chev" viewBox="0 0 12 12"><path d="M2 4l4 4 4-4"/></svg></button>
                </div>
            </div>
            <div class="prompt">
                <label for="cmd-input">命令行:</label>
                <input id="cmd-input" type="text">
            </div>
        </section>

        <footer class="status">
            <span class="doc">1.dwg</span>
            <div class="pages">
                <span>1/3</span>
                <button class="push" aria-label="对象捕捉"><svg viewBox="0 0 20 20"><path d="M6 15V8c0-7 9-7 9 0" fill="none" stroke="#d7606b" stroke-width="3"/><path d="M15 7v7" stroke="#587ec2" stroke-width="3"/><path d="M4 10l5 7 5-6" fill="none" stroke="#16833a" stroke-width="3"/><path d="M15 15h4v4h-4z" fill="#901a55"/></svg></button>
                <button aria-label="栅格"><svg viewBox="0 0 20 20"><path d="M1 3h18M1 10h18M1 17h18" stroke="#222" stroke-width="2" stroke-dasharray="2 3"/></svg></button>
                <button aria-label="正交"><svg viewBox="0 0 20 20"><path d="M10 2v15M1 17h18" stroke="#2a5d98" stroke-width="1.500"/></svg></button>
                <button aria-label="极轴"><svg viewBox="0 0 20 20"><circle cx="9" cy="11" r="6" fill="none" stroke="#3e8d86" stroke-width="2"/><path d="M2 10l7 8 3-6h7M9 12l9-11" fill="none" stroke="#15783a" stroke-width="3"/></svg></button>
            </div>
            <span>(226147.3; 47620.43; 0)</span>
            <span></span>
            <span class="size">95501.45 x 126000 x 1273.012</span>
        </footer>
    </div>

    <!-- callout pointing at 单行文本 -->
    <svg class="callout" viewBox="0 0 310 650">
        <rect x="11" y="7" width="151" height="34" fill="none" stroke="#f00" stroke-width="6"/>
        <path d="M305 650L106 66" stroke="#e3141c" stroke-width="2"/>
        <path d="M101 53l11 15-14 5z" fill="#e3141c" stroke="#e3141c"/>
    </svg>
</body>
</html>
```

FILE: styles.css
```
* {
    box-sizing: border-box;
}
body {
    margin: 0;
    min-height: 100vh;
    display: flex;
    flex-direction: column;
    position: relative;
    background: #2e3b45;
    color: #1c2838;
    font-family: "Noto Sans", "Noto Sans CJK SC", sans-serif;
    font-size: 16px;
    overflow: hidden;
}
button {
    display: flex;
    align-items: center;
    padding: 0;
    border: 0;
    background: none;
    color: inherit;
    font: inherit;
    white-space: nowrap;
}
svg {
    display: block;
    flex: none;
}
h1, h2, h3 {
    margin: 0;
    font-weight: 400;
}

/* title bar */
.titlebar {
    display: flex;
    align-items: center;
    height: 42px;
    padding: 0 8px 0 7px;
    background: #333;
    color: #f2f2f2;
    font-family: "Noto Sans CJK SC", sans-serif;
}
.logo {
    width: 28px;
    height: 28px;
    margin-right: 11px;
}
.quick {
    display: flex;
}
.quick button {
    width: 37px;
    justify-content: center;
}
.quick svg {
    width: 22px;
    height: 22px;
}
.pdf {
    font: bold 9px "Liberation Sans", sans-serif;
    fill: #fff;
    text-anchor: middle;
}
.title {
    flex: 1;
    padding-right: 42px;
    text-align: center;
    font-size: 20px;
    line-height: 40px;
}
.account {
    display: flex;
    gap: 14px;
    font-size: 18px;
}
.account button {
    gap: 7px;
}
.account svg {
    width: 25px;
    height: 25px;
}
.window-buttons {
    display: flex;
    gap: 18px;
    padding-left: 21px;
}
.window-buttons svg {
    width: 20px;
    height: 20px;
}

.frame {
    flex: 1;
    display: flex;
    flex-direction: column;
    margin: 0 3px 3px;
    background: #f0f0f0;
}

/* ribbon tabs */
.tabs {
    display: flex;
    height: 26px;
    border-bottom: 2px solid #444;
    background: linear-gradient(#444, #9a9a9a 35%, #f2f2f2 85%, #fff);
}
.tab {
    justify-content: center;
    width: 55px;
    color: #4b5f86;
    font-size: 14px;
    line-height: 20px;
}
.tab:nth-child(2) {
    width: 78px;
}
.tab.file {
    width: 67px;
    background: linear-gradient(#1f4fa8, #2f6fd0);
    color: #fff;
    font-size: 15px;
}
.tab.active {
    width: 65px;
    height: 26px;
    background: #fcfdff;
    color: #2f4a78;
    font-size: 16px;
}
.tab-tools {
    display: flex;
    gap: 12px;
    margin-left: auto;
    padding: 0 6px 4px 30px;
    background: linear-gradient(90deg, transparent 80%, #222);
}
.tab-tools svg {
    width: 20px;
    height: 20px;
}
.help {
    font: bold 17px "Liberation Sans", sans-serif;
    fill: #fff;
    text-anchor: middle;
}
button .caret {
    width: 8px;
    height: 5px;
    margin-left: 2px;
    fill: #222;
}

/* ribbon */
.ribbon {
    display: flex;
    height: 117px;
    border-bottom: 1px solid #98a9c0;
    background: linear-gradient(#f6fbff, #e7eefa 25%, #e2ebf8 55%, #dce9f5 62%, #dfe8f5);
}
.group {
    border-right: 1px solid #b4c4d8;
    box-shadow: 1px 0 #f6faff;
}
.group h2 {
    padding-left: 10px;
    color: #3c5274;
    font-size: 16px;
    line-height: 26px;
    text-align: center;
}
.tools {
    display: grid;
    grid-template-rows: repeat(3, 29px);
    padding-top: 4px;
    height: 91px;
    align-items: center;
    color: #1b2433;
}
.tools svg {
    width: 20px;
    height: 20px;
}
.tools button .caret {
    width: 8px;
    height: 5px;
}
.cmd {
    gap: 5px;
    line-height: 22px;
}
.select {
    grid-template-columns: 111px 142px;
    padding-left: 15px;
    padding-right: 14px;
}
.draw {
    grid-template-columns: 30px 44px 32px 44px 32px 34px;
    padding-left: 18px;
    padding-right: 4px;
}
.draw .hatch {
    padding-left: 2px;
}
.text {
    grid-template-columns: 111px 22px;
    padding-left: 17px;
    padding-right: 4px;
}
.modify {
    grid-template-columns: 31px 30px 47px 43px 30px 29px 20px;
    padding-left: 17px;
    padding-right: 5px;
}
.props {
    grid-template-columns: 60px;
    padding-left: 18px;
    padding-right: 14px;
}
.snap {
    grid-template-columns: 84px repeat(3, 30px) 25px;
    padding-left: 10px;
    padding-right: 2px;
}
.edit {
    grid-template-columns: 29px 20px;
    padding-left: 19px;
    padding-right: 4px;
}
.line {
    fill: none;
    stroke: #46566a;
    stroke-width: 1.5;
}
.line.blue {
    stroke: #2b62b4;
}
.line.navy {
    stroke: #2d4f8c;
}
.node {
    fill: #2556a0;
    stroke: none;
}
.box {
    fill: #eef5ff;
    stroke: #2b5fb0;
    stroke-width: 1.5;
}
.letter {
    font: bold 13px "Liberation Serif", serif;
    fill: #1f4f9c;
    text-anchor: middle;
}
.letter.big {
    font-size: 18px;
}
.small-q {
    font: bold 10px "Liberation Sans", sans-serif;
    fill: #222;
    text-anchor: middle;
}
.off {
    color: #9a9fa8;
}
.off .line {
    stroke: #a2a2a2;
}
.off .caret {
    fill: #999;
}
.hover {
    width: 104px;
    height: 25px;
    border-radius: 3px;
    background: linear-gradient(#fdeeb4, #fbdf86);
}
.toggle {
    justify-content: center;
    width: 25px;
    height: 25px;
    border: 1px solid transparent;
    border-radius: 3px;
}
.on {
    border: 1px solid #bf9652;
    border-radius: 4px;
    background: linear-gradient(#fbcf85, #ffdc8c);
}
.snap-big {
    grid-row: 1 / 4;
    flex-direction: column;
    width: 74px;
    height: 86px;
    padding-top: 8px;
    background: linear-gradient(#f8cd86, #fcc665 50%, #ffdf8e);
}
.snap-big svg {
    width: 40px;
    height: 40px;
}

/* document tabs */
.doc-tabs {
    display: flex;
    justify-content: space-between;
    align-items: flex-end;
    height: 34px;
    padding: 0 9px 0 5px;
    background: linear-gradient(90deg, #cbdcf2, #dfeafa 50%, #ecf5ff);
}
.doc-tab {
    display: flex;
    align-items: center;
    gap: 10px;
    height: 28px;
    padding: 0 5px 0 9px;
    border: 1px solid #9fb2cf;
    border-right-width: 3px;
    border-bottom: 0;
    background: #d5e3f6;
    color: #2c3c55;
    font-size: 14px;
}
.mini {
    justify-content: center;
    width: 21px;
    height: 21px;
    border: 1px solid #a5b6d4;
    border-radius: 3px;
    background: #dde8f8;
}
.mini svg {
    width: 14px;
    height: 14px;
}
.doc-tabs > .mini {
    margin-bottom: 3px;
}

/* workspace */
.workspace {
    flex: 1;
    display: flex;
    min-height: 0;
}
.side {
    display: flex;
    flex-direction: column;
    width: 316px;
    padding: 2px 4px 0 0;
}
.panel-head {
    display: flex;
    align-items: center;
    justify-content: space-between;
    flex: none;
    height: 19px;
    padding: 0 8px;
    border: 1px solid #8296b8;
    background: linear-gradient(#dcebff, #b4d4fd);
    color: #4468a6;
    font-size: 16px;
    line-height: 16px;
}
.pin {
    width: 10px;
    height: 13px;
}
.preset {
    height: 31px;
    margin: 1px 1px 0 0;
    padding: 0 5px;
    border: 1px solid #b8b8b8;
    border-radius: 0;
    appearance: none;
    background: #e1e1e1 url("data:image/svg+xml,%3Csvg xmlns='http://www.w3.org/2000/svg' width='12' height='8'%3E%3Cpath d='M1 1l5 5 5-5' fill='none' stroke='%23666'/%3E%3C/svg%3E") no-repeat right 4px center;
    color: #222;
    font: inherit;
}
.prop-area {
    display: flex;
    height: 289px;
    padding-right: 2px;
}
.prop-table {
    flex: 1;
    height: 289px;
    border-collapse: collapse;
    background: #e3ebf9;
    table-layout: fixed;
    font-size: 15px;
    line-height: 20px;
    color: #202c40;
}
.prop-table th {
    width: 171px;
    padding: 0 0 0 51px;
    border-right: 1px solid #8490a4;
    border-bottom: 1px dashed #98a2b4;
    font-weight: 400;
    text-align: left;
}
.prop-table td {
    padding: 0 0 0 3px;
    border-bottom: 1px dashed #98a2b4;
    font-size: 14px;
}
.prop-table tr:nth-child(10) th {
    font-size: 13px;
}
.prop-table .section th {
    padding-left: 8px;
    border-bottom: 0;
}
.prop-table .section td {
    border-bottom: 0;
}
.prop-table .first {
    box-shadow: inset 0 -1px #fff;
}
.prop-table .color {
    padding-left: 7px;
    font-size: 15px;
}
.prop-table tr:nth-child(4) td, .prop-table tr:nth-child(6) td {
    font-size: 15px;
}
.prop-table tr:nth-child(7) td {
    font-size: 13px;
}
.minus {
    display: inline-block;
    width: 14px;
    height: 14px;
    margin-right: 5px;
    border: 1px solid #222;
    background: linear-gradient(#222, #222) center / 8px 1px no-repeat #fff;
    vertical-align: -1px;
}
.swatch {
    display: inline-block;
    width: 14px;
    height: 14px;
    margin-right: 4px;
    background: #000;
    vertical-align: -1px;
}
.vscroll {
    display: flex;
    flex-direction: column;
    align-items: center;
    width: 21px;
    padding: 4px 0;
    background: #f0f0f0;
}
.vscroll button, .hscroll button {
    justify-content: center;
    width: 18px;
    height: 16px;
}
.vscroll .end {
    margin-top: auto;
}
.chev {
    width: 12px;
    height: 12px;
    fill: none;
    stroke: #505050;
    stroke-width: 2;
}
.dim .chev {
    stroke: #bbb;
}
.thumb {
    width: 18px;
    height: 21px;
    background: #cdcdcd;
}
.panel-head.fav {
    margin-top: 10px;
    padding-right: 28px;
}
.fav-list {
    flex: 1;
    margin-top: 1px;
    border: 1px solid #a3a3a3;
    background: #fff;
}
.fav-list table {
    width: 100%;
    border-collapse: collapse;
}
.fav-list th {
    width: 154px;
    height: 31px;
    padding: 0 8px;
    border-right: 1px solid #e4e4e4;
    font-weight: 400;
    line-height: 20px;
    text-align: left;
}

.view {
    flex: 1;
    display: flex;
    flex-direction: column;
    min-width: 0;
}
.canvas {
    flex: 1;
    position: relative;
    min-height: 0;
    background: #000;
}
.drawing {
    position: absolute;
    width: 100%;
    height: 100%;
}
.frame-line {
    fill: none;
    stroke: #1fb9b5;
    stroke-width: 4;
}
.frame-bold {
    fill: none;
    stroke: #27e2e6;
    stroke-width: 7;
}
.g, .gc {
    fill: none;
    stroke: #0ed824;
    stroke-width: 4;
}
.r {
    fill: none;
    stroke: #d8141e;
    stroke-width: 3;
}
.o {
    fill: none;
    stroke: #f2cf1c;
    stroke-width: 5;
}
.c2 {
    fill: none;
    stroke: #2fb2d4;
    stroke-width: 4;
}
.gt {
    fill: none;
    stroke: #2fe838;
    stroke-width: 14;
    stroke-dasharray: 10 1 6 2;
}
.label {
    fill: none;
    stroke: #fff;
    stroke-width: 9;
    stroke-dasharray: 17 1 9 1;
}
.note {
    fill: none;
    stroke: #fff;
    stroke-width: 8;
    stroke-dasharray: 29 1 13 2 23 1;
}
.mdi {
    position: absolute;
    top: 2px;
    right: 8px;
    display: flex;
    gap: 6px;
}
.mdi svg {
    width: 14px;
    height: 14px;
}
.translate {
    position: absolute;
    top: 21px;
    right: 12px;
    justify-content: center;
    width: 60px;
    height: 60px;
    border: 3px solid #fff;
    border-radius: 50%;
    background: #4a80d4;
}
.translate svg {
    width: 30px;
    height: 30px;
}
.tr {
    font: bold 13px "Liberation Sans", sans-serif;
    fill: #4a80d4;
    text-anchor: middle;
}
.sheet-bar {
    display: flex;
    height: 26px;
    background: linear-gradient(90deg, #c9dcf3, #e9f3fd 60%, #eef3fa);
}
.sheet-tab {
    justify-content: center;
    width: 68px;
    height: 23px;
    margin-left: 6px;
    background: url("data:image/svg+xml,%3Csvg xmlns='http://www.w3.org/2000/svg' width='68' height='23'%3E%3Cpath d='M1 0l9 22h49L67 0' fill='%23d8e6f8' stroke='%2398a9c0'/%3E%3C/svg%3E") no-repeat;
    font-size: 14px;
    line-height: 20px;
}
.sheet-bar .mini {
    margin: 4px 6px 0 auto;
}
.hscroll {
    display: flex;
    align-items: center;
    width: 543px;
    height: 22px;
    padding: 0 1px 0 4px;
    border-left: 2px dotted #9fb2cf;
    background: #f0f0f0;
}
.hscroll .thumb {
    margin-left: 128px;
    width: 21px;
    height: 19px;
}
.hscroll .end {
    margin-left: auto;
}
.view-scroll {
    margin-bottom: 26px;
    padding-bottom: 2px;
}
.view-scroll .thumb {
    margin-top: 257px;
}

/* command line */
.command {
    margin-top: 7px;
}
.log {
    display: flex;
    height: 76px;
    margin-top: 1px;
    border-top: 1px solid #8a8a94;
    border-bottom: 3px solid #858585;
    background: #fff;
}
.log textarea {
    flex: 1;
    padding: 4px;
    border: 0;
    outline: 0;
    resize: none;
    font: inherit;
}
.prompt {
    display: flex;
    height: 27px;
    background: #bcd8fc;
}
.prompt label {
    width: 73px;
    padding-left: 9px;
    line-height: 24px;
}
.prompt input {
    flex: 1;
    padding: 0 4px;
    border: 1px solid #80868f;
    border-top: 0;
    outline: 0;
    background: #fff;
    font: inherit;
}

/* status bar */
.status {
    display: grid;
    grid-template-columns: 1fr 224px 313px 152px 207px;
    height: 24px;
    background: linear-gradient(#e9f3ff, #dbe8fa 60%, #c4d9f5);
    color: #46587c;
    font-size: 13px;
    line-height: 22px;
}
.status > * {
    padding-left: 8px;
    border-right: 1px solid #c5d3e8;
}
.status .size {
    padding: 0 16px 0 0;
    border: 0;
    text-align: right;
}
.pages {
    display: flex;
    gap: 6px;
    align-items: center;
}
.pages svg {
    width: 20px;
    height: 20px;
}
.pages .push {
    margin-left: auto;
}

.callout {
    position: absolute;
    left: 510px;
    top: 90px;
    width: 310px;
    height: 650px;
    pointer-events: none;
}
```
